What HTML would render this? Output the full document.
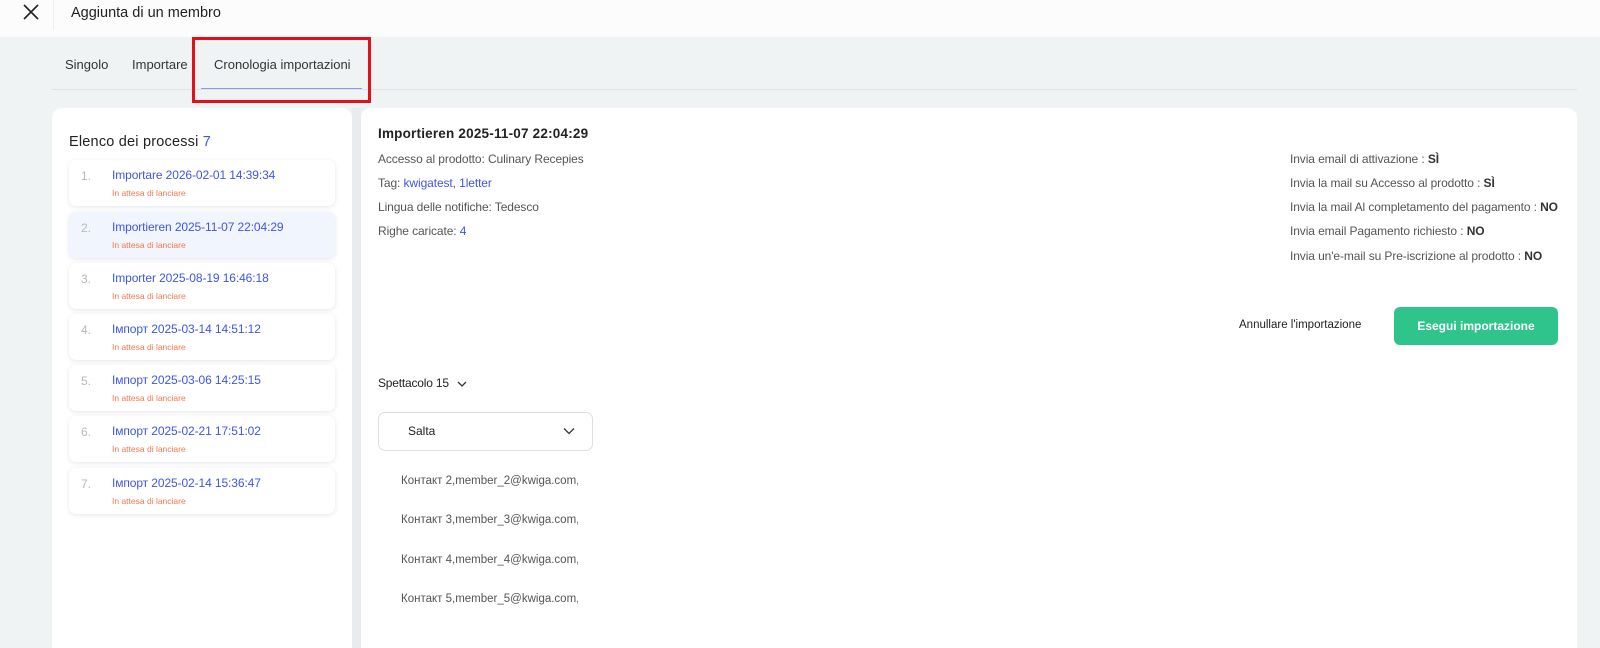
<!DOCTYPE html>
<html><head><meta charset="utf-8"><style>
*{margin:0;padding:0;box-sizing:border-box}
body{width:1600px;height:640px;overflow:hidden;background:#f0f3f4;font-family:"Liberation Sans",sans-serif;position:relative;color:#222}
.a{position:absolute;white-space:nowrap}
.hdr{position:absolute;left:0;top:0;width:1600px;height:37px;background:#fcfcfd}
.lp{position:absolute;left:52px;top:108px;width:300px;height:540px;background:#fff;border-radius:10px 10px 0 0}
.gap{position:absolute;left:352px;top:108px;width:9px;height:540px;background:#e8ecef}
.rp{position:absolute;left:361px;top:108px;width:1216px;height:540px;background:#fff;border-radius:10px 10px 0 0}
.it{position:absolute;left:69px;width:266px;height:46px;background:#fff;border-radius:7px;box-shadow:0 1px 4px rgba(40,50,80,.12)}
.it.s{background:#f1f5fd}
.it .n{position:absolute;left:12px;top:9px;font-size:12px;color:#b3b8c4}
.it .t{position:absolute;left:43px;top:8px;font-size:12px;color:#3f55e8;letter-spacing:-.1px}
.it .st{position:absolute;left:43px;top:28px;font-size:8.5px;color:#f3774e}
.g{font-size:12px;color:#555;letter-spacing:-.1px}
.b{color:#3f55e8}
.k{font-weight:bold;color:#333}
</style></head><body>
<div class="hdr"></div>
<svg class="a" style="left:23px;top:4px" width="16" height="16" viewBox="0 0 16 16"><path d="M1 1L15 15M15 1L1 15" stroke="#222" stroke-width="1.6"/></svg>
<div class="a" style="left:53px;top:0;width:1px;height:30px;background:#eee"></div>
<div class="a" style="left:71px;top:5px;font-size:14.5px;color:#222">Aggiunta di un membro</div>
<div class="a" style="left:65px;top:57px;font-size:13px;color:#333">Singolo</div>
<div class="a" style="left:132px;top:57px;font-size:13px;color:#333">Importare</div>
<div class="a" style="left:214px;top:57px;font-size:13px;color:#333">Cronologia importazioni</div>
<div class="a" style="left:52px;top:89px;width:1525px;height:1px;background:#dfe3e6"></div>
<div class="a" style="left:201px;top:88px;width:161px;height:1px;background:#8d99f0"></div>
<div class="a" style="left:192px;top:37px;width:179px;height:66px;border:3px solid #e3101a"></div>
<div class="lp"></div><div class="gap"></div><div class="rp"></div>
<div class="a" style="left:69px;top:134px;font-size:14.5px;color:#222;letter-spacing:.2px">Elenco dei processi <span class="b">7</span></div>
<div class="it" style="top:160px"><span class="n">1.</span><span class="t">Importare 2026-02-01 14:39:34</span><span class="st">In attesa di lanciare</span></div>
<div class="it s" style="top:212px"><span class="n">2.</span><span class="t">Importieren 2025-11-07 22:04:29</span><span class="st">In attesa di lanciare</span></div>
<div class="it" style="top:263px"><span class="n">3.</span><span class="t">Importer 2025-08-19 16:46:18</span><span class="st">In attesa di lanciare</span></div>
<div class="it" style="top:314px"><span class="n">4.</span><span class="t">Імпорт 2025-03-14 14:51:12</span><span class="st">In attesa di lanciare</span></div>
<div class="it" style="top:365px"><span class="n">5.</span><span class="t">Імпорт 2025-03-06 14:25:15</span><span class="st">In attesa di lanciare</span></div>
<div class="it" style="top:416px"><span class="n">6.</span><span class="t">Імпорт 2025-02-21 17:51:02</span><span class="st">In attesa di lanciare</span></div>
<div class="it" style="top:468px"><span class="n">7.</span><span class="t">Імпорт 2025-02-14 15:36:47</span><span class="st">In attesa di lanciare</span></div>

<div class="a" style="left:378px;top:126px;font-size:13.5px;font-weight:bold;color:#222;letter-spacing:.2px">Importieren 2025-11-07 22:04:29</div>
<div class="a g" style="left:378px;top:152px">Accesso al prodotto: Culinary Recepies</div>
<div class="a g" style="left:378px;top:176px">Tag: <span class="b">kwigatest</span>, <span class="b">1letter</span></div>
<div class="a g" style="left:378px;top:200px">Lingua delle notifiche: Tedesco</div>
<div class="a g" style="left:378px;top:224px">Righe caricate: <span class="b">4</span></div>

<div class="a g" style="left:1290px;top:152px">Invia email di attivazione : <span class="k">SÌ</span></div>
<div class="a g" style="left:1290px;top:176px">Invia la mail su Accesso al prodotto : <span class="k">SÌ</span></div>
<div class="a g" style="left:1290px;top:200px">Invia la mail Al completamento del pagamento : <span class="k">NO</span></div>
<div class="a g" style="left:1290px;top:224px">Invia email Pagamento richiesto : <span class="k">NO</span></div>
<div class="a g" style="left:1290px;top:249px">Invia un'e-mail su Pre-iscrizione al prodotto : <span class="k">NO</span></div>

<div class="a" style="left:1239px;top:319px;font-size:11.5px;color:#222">Annullare l'importazione</div>
<div class="a" style="left:1394px;top:307px;width:164px;height:38px;background:#2ec48c;border-radius:6px;color:#fff;font-size:12px;font-weight:bold;text-align:center;line-height:38px">Esegui importazione</div>

<div class="a" style="left:378px;top:376px;font-size:12px;color:#222;letter-spacing:-.2px">Spettacolo 15</div>
<svg class="a" style="left:457px;top:380px" width="10" height="8" viewBox="0 0 10 8"><path d="M1 2L5 6L9 2" stroke="#333" stroke-width="1.3" fill="none"/></svg>
<div class="a" style="left:378px;top:412px;width:215px;height:39px;border:1px solid #dcdfe8;border-radius:7px"></div>
<div class="a" style="left:408px;top:424px;font-size:12px;color:#222">Salta</div>
<svg class="a" style="left:563px;top:427px" width="12" height="8" viewBox="0 0 12 8"><path d="M1 1.5L6 6.5L11 1.5" stroke="#333" stroke-width="1.3" fill="none"/></svg>

<div class="a" style="left:401px;top:475px;width:177px;overflow:hidden;font-size:11.5px;color:#555">Контакт 2,member_2@kwiga.com,3</div>
<div class="a" style="left:401px;top:514px;width:177px;overflow:hidden;font-size:11.5px;color:#555">Контакт 3,member_3@kwiga.com,3</div>
<div class="a" style="left:401px;top:554px;width:177px;overflow:hidden;font-size:11.5px;color:#555">Контакт 4,member_4@kwiga.com,3</div>
<div class="a" style="left:401px;top:593px;width:177px;overflow:hidden;font-size:11.5px;color:#555">Контакт 5,member_5@kwiga.com,3</div>
</body></html>
